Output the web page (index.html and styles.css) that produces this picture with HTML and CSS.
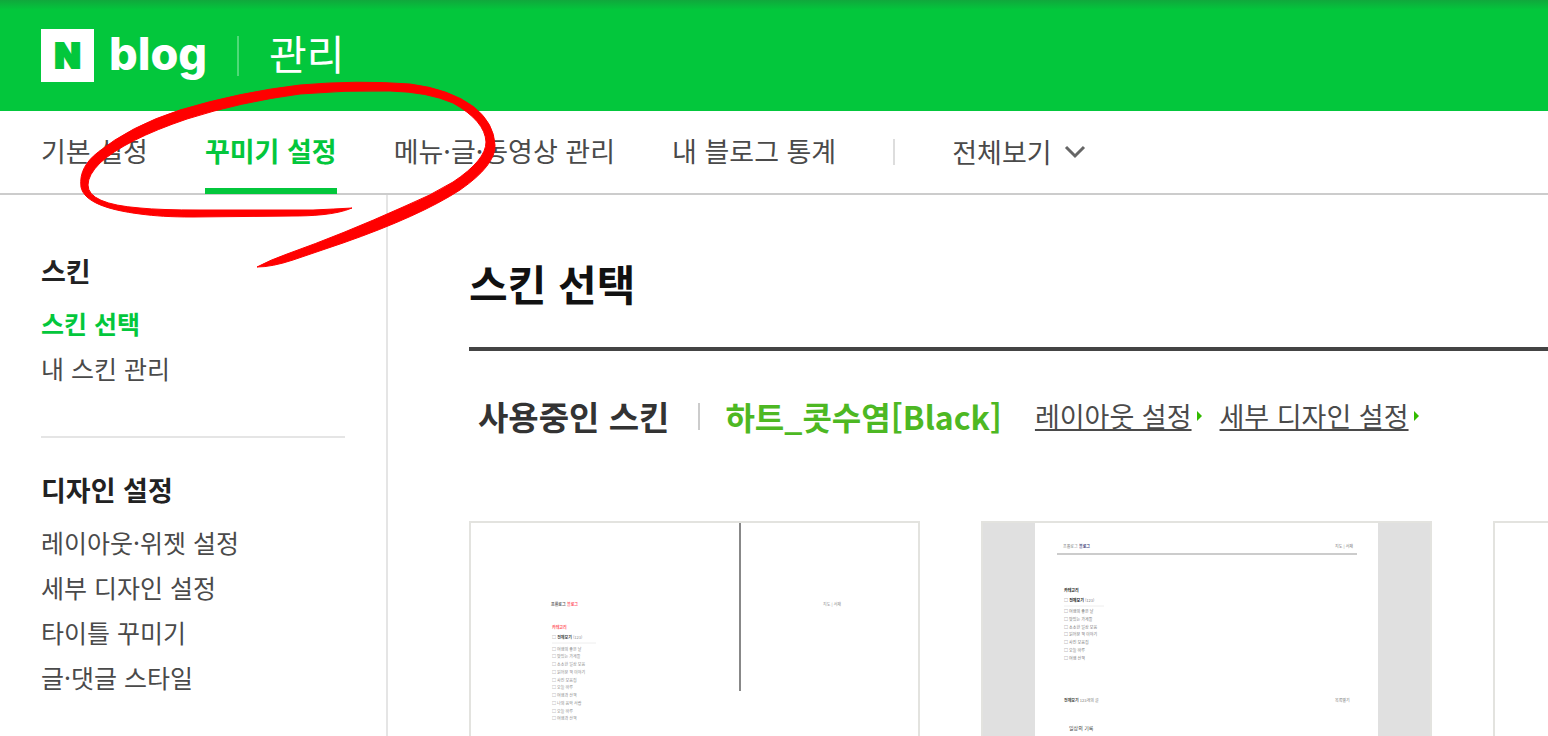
FILE: index.html
```html
<!DOCTYPE html>
<html lang="ko">
<head>
    <meta charset="UTF-8">
    <meta name="viewport" content="width=device-width, initial-scale=1.0">
    <title>블로그 관리 - 스킨 선택</title>
    <link rel="stylesheet" href="styles.css">
</head>
<body>
    <header class="header">
        <a href="#" class="logo-n">N</a>
        <a href="#" class="logo-blog">blog</a>
        <span class="header-line"></span>
        <a href="#" class="header-title">관리</a>
    </header>

    <nav class="nav">
        <a href="#">기본 설정</a>
        <a href="#" class="active">꾸미기 설정</a>
        <a href="#">메뉴·글·동영상 관리</a>
        <a href="#">내 블로그 통계</a>
        <span class="nav-line"></span>
        <button type="button" class="nav-all">
            전체보기
            <svg width="22" height="14" viewBox="0 0 22 14"><path d="M2 2l9 9 9-9" fill="none" stroke="#666" stroke-width="3"/></svg>
        </button>
    </nav>

    <div class="layout">
        <aside class="sidebar">
            <section>
                <h2>스킨</h2>
                <ul>
                    <li><a href="#" class="active">스킨 선택</a></li>
                    <li><a href="#">내 스킨 관리</a></li>
                </ul>
            </section>
            <section>
                <h2>디자인 설정</h2>
                <ul>
                    <li><a href="#">레이아웃·위젯 설정</a></li>
                    <li><a href="#">세부 디자인 설정</a></li>
                    <li><a href="#">타이틀 꾸미기</a></li>
                    <li><a href="#">글·댓글 스타일</a></li>
                </ul>
            </section>
        </aside>

        <main class="main">
            <h1>스킨 선택</h1>

            <div class="current">
                <strong>사용중인 스킨</strong>
                <span class="current-line"></span>
                <strong class="skin-name">하트_콧수염[Black]</strong>
                <a href="#">레이아웃 설정</a>
                <a href="#">세부 디자인 설정</a>
            </div>

            <div class="skins">
                <div class="skin">
                    <svg class="thumb" viewBox="0 0 447 220">
                        <rect x="268" y="0" width="2" height="168" fill="#888"/>
                        <g font-size="4" fill="#888">
                            <text x="80" y="83" font-weight="bold" fill="#666">프롤로그</text>
                            <text x="96" y="83" font-weight="bold" fill="#ff5566">블로그</text>
                            <text x="352" y="83">지도 | 서재</text>
                            <text x="81" y="106" font-weight="bold" fill="#ff5566">카테고리</text>
                            <text x="81" y="116">□ <tspan font-weight="bold" fill="#444">전체보기</tspan> (123)</text>
                            <text x="81" y="128">□ 여행의 좋은 날</text>
                            <text x="81" y="135">□ 맛있는 가게들</text>
                            <text x="81" y="143">□ 소소한 일상 모음</text>
                            <text x="81" y="151">□ 읽어본 책 이야기</text>
                            <text x="81" y="159">□ 사진 모음집</text>
                            <text x="81" y="166">□ 오늘 하루</text>
                            <text x="81" y="174">□ 여행과 산책</text>
                            <text x="81" y="182">□ 나의 음악 서랍</text>
                            <text x="81" y="190">□ 오늘 하루</text>
                            <text x="81" y="197">□ 여행과 산책</text>
                        </g>
                        <path d="M81 120h44" stroke="#eee"/>
                    </svg>
                </div>
                <div class="skin skin-gray">
                    <svg class="thumb" viewBox="0 0 447 220">
                        <rect x="52" width="343" height="220" fill="#fff"/>
                        <path d="M74 31h300" stroke="#ccc" stroke-width="2"/>
                        <g font-size="4" fill="#777">
                            <text x="80" y="25">프롤로그</text>
                            <text x="96" y="25" font-weight="bold" fill="#44447a">블로그</text>
                            <text x="352" y="25">지도 | 서재</text>
                            <text x="81" y="69" font-weight="bold" fill="#222">카테고리</text>
                            <text x="81" y="79">□ <tspan font-weight="bold" fill="#222">전체보기</tspan> (123)</text>
                            <text x="81" y="90">□ 여행의 좋은 날</text>
                            <text x="81" y="98">□ 맛있는 가게들</text>
                            <text x="81" y="106">□ 소소한 일상 모음</text>
                            <text x="81" y="113">□ 읽어본 책 이야기</text>
                            <text x="81" y="121">□ 사진 모음집</text>
                            <text x="81" y="129">□ 오늘 하루</text>
                            <text x="81" y="137">□ 여행 산책</text>
                            <text x="81" y="179"><tspan font-weight="bold" fill="#444">전체보기</tspan> 123개의 글</text>
                            <text x="352" y="179">목록열기</text>
                            <text x="86" y="207" font-size="5" fill="#444">일상의 기록</text>
                        </g>
                        <path d="M81 83h40" stroke="#eee"/>
                    </svg>
                </div>
                <div class="skin"></div>
            </div>
        </main>
    </div>

    <!-- hand drawn marker around the active menu -->
    <svg class="marker" width="420" height="190" viewBox="79 80 420 190">
        <path fill="#f00" stroke="#f00" stroke-linejoin="round" d="M352 208C336 215 310 216 293 216L193 217C170 217 155 216 140 214C108 210 84 202 81 187C79 172 87 161 97 153Q130 126 180 110Q240 92 300 85Q357 80 410 84Q450 89 474 107Q494 123 495 145Q496 165 460 190Q420 216 343 243L293 260Q272 267 257 267Q270 260 287 254Q343 234 403 207Q430 196 453 182Q486 160 486 142Q485 121 453 103Q428 92 390 91Q345 90 300 94Q240 102 187 119Q125 140 100 163Q88 175 88 185Q88 204 140 208Q160 210 200 210L313 210Q335 209 352 208Z"/>
    </svg>
</body>
</html>
```
FILE: styles.css
```css
* {
    box-sizing: border-box;
}
body {
    display: flex;
    flex-direction: column;
    min-height: 100vh;
    margin: 0;
    background: #fff;
    color: #4a4a4a;
    font-family: "Noto Sans CJK KR", sans-serif;
    font-size: 27px;
    line-height: 36px;
    overflow-x: hidden;
    position: relative;
}
a {
    color: inherit;
    text-decoration: none;
}
h1, h2, ul {
    margin: 0;
    padding: 0;
}
ul {
    list-style: none;
}

/* header */
.header {
    display: flex;
    align-items: center;
    height: 111px;
    padding: 0 41px;
    background: linear-gradient(#10a83c, #03c73c 10px);
    color: #fff;
}
.logo-n {
    display: flex;
    align-items: center;
    justify-content: center;
    width: 53px;
    height: 53px;
    background: #fff;
    color: #03c73c;
    font-family: Inter, sans-serif;
    font-size: 34px;
    font-weight: 900;
    -webkit-text-stroke: 2px #03c73c;
}
.logo-blog {
    padding-bottom: 4px;
    margin-left: 15px;
    font-family: Inter, sans-serif;
    font-size: 45px;
    font-weight: 800;
}
.header-line {
    width: 2px;
    height: 40px;
    margin: 0 30px;
    background: #4fd977;
}
.header-title {
    padding-bottom: 8px;
    font-size: 41px;
}

/* top menu */
.nav {
    display: flex;
    align-items: center;
    gap: 57px;
    height: 84px;
    padding: 0 41px;
    border-bottom: 2px solid #ccc;
    white-space: nowrap;
}
.nav a {
    height: 83px;
    line-height: 80px;
}
.nav .active {
    border-bottom: 6px solid #03c73c;
    color: #03c73c;
    font-weight: bold;
}
.nav-line {
    width: 2px;
    height: 26px;
    background: #ddd;
}
.nav-all {
    display: flex;
    align-items: center;
    gap: 12px;
    padding: 0;
    border: none;
    background: none;
    color: inherit;
    font: inherit;
    cursor: pointer;
}

/* layout */
.layout {
    display: flex;
    flex: 1;
}
.sidebar {
    flex: none;
    width: 388px;
    padding: 58px 41px 0;
    border-right: 2px solid #e5e5e5;
}
.sidebar section + section {
    margin-top: 45px;
    padding-top: 34px;
    border-top: 2px solid #e5e5e5;
}
.sidebar h2 {
    margin-bottom: 12px;
    color: #222;
    font-size: 27px;
    line-height: 36px;
}
.sidebar li {
    font-size: 25px;
    line-height: 45px;
}
.sidebar .active {
    color: #03c73c;
    font-weight: bold;
}
.main {
    display: flex;
    flex-direction: column;
    flex: 1;
    min-width: 0;
    padding-left: 81px;
    overflow: hidden;
}
h1 {
    padding: 58px 0 34px;
    border-bottom: 4px solid #444;
    color: #111;
    font-size: 42px;
    line-height: 60px;
}

/* skin in use */
.current {
    display: flex;
    align-items: center;
    margin: 45px 0 85px;
    padding-left: 9px;
    white-space: nowrap;
    line-height: 40px;
}
.current strong {
    color: #333;
    font-size: 33px;
}
.current-line {
    width: 2px;
    height: 27px;
    margin: 0 25px 0 29px;
    background: #ccc;
}
.current .skin-name {
    margin-right: 33px;
    color: #4db823;
    font-size: 32px;
}
.current a {
    display: flex;
    align-items: center;
    gap: 5px;
    margin-right: 18px;
    text-decoration: underline;
    text-decoration-thickness: 2px;
    text-underline-offset: 2px;
}
.current a::after {
    content: "";
    border: 5px solid transparent;
    border-left-color: #3b0;
    border-right-width: 0;
}

/* skin list */
.skins {
    display: grid;
    grid-template-columns: repeat(3, 451px);
    gap: 61px;
    flex: 1;
}
.skin {
    height: 215px;
    border: 2px solid #e3e3df;
    border-bottom: none;
    overflow: hidden;
}
.skin-gray {
    background: #e0e0e0;
}
.thumb {
    display: block;
    width: 100%;
}

.marker {
    position: absolute;
    top: 80px;
    left: 79px;
    pointer-events: none;
}
```
